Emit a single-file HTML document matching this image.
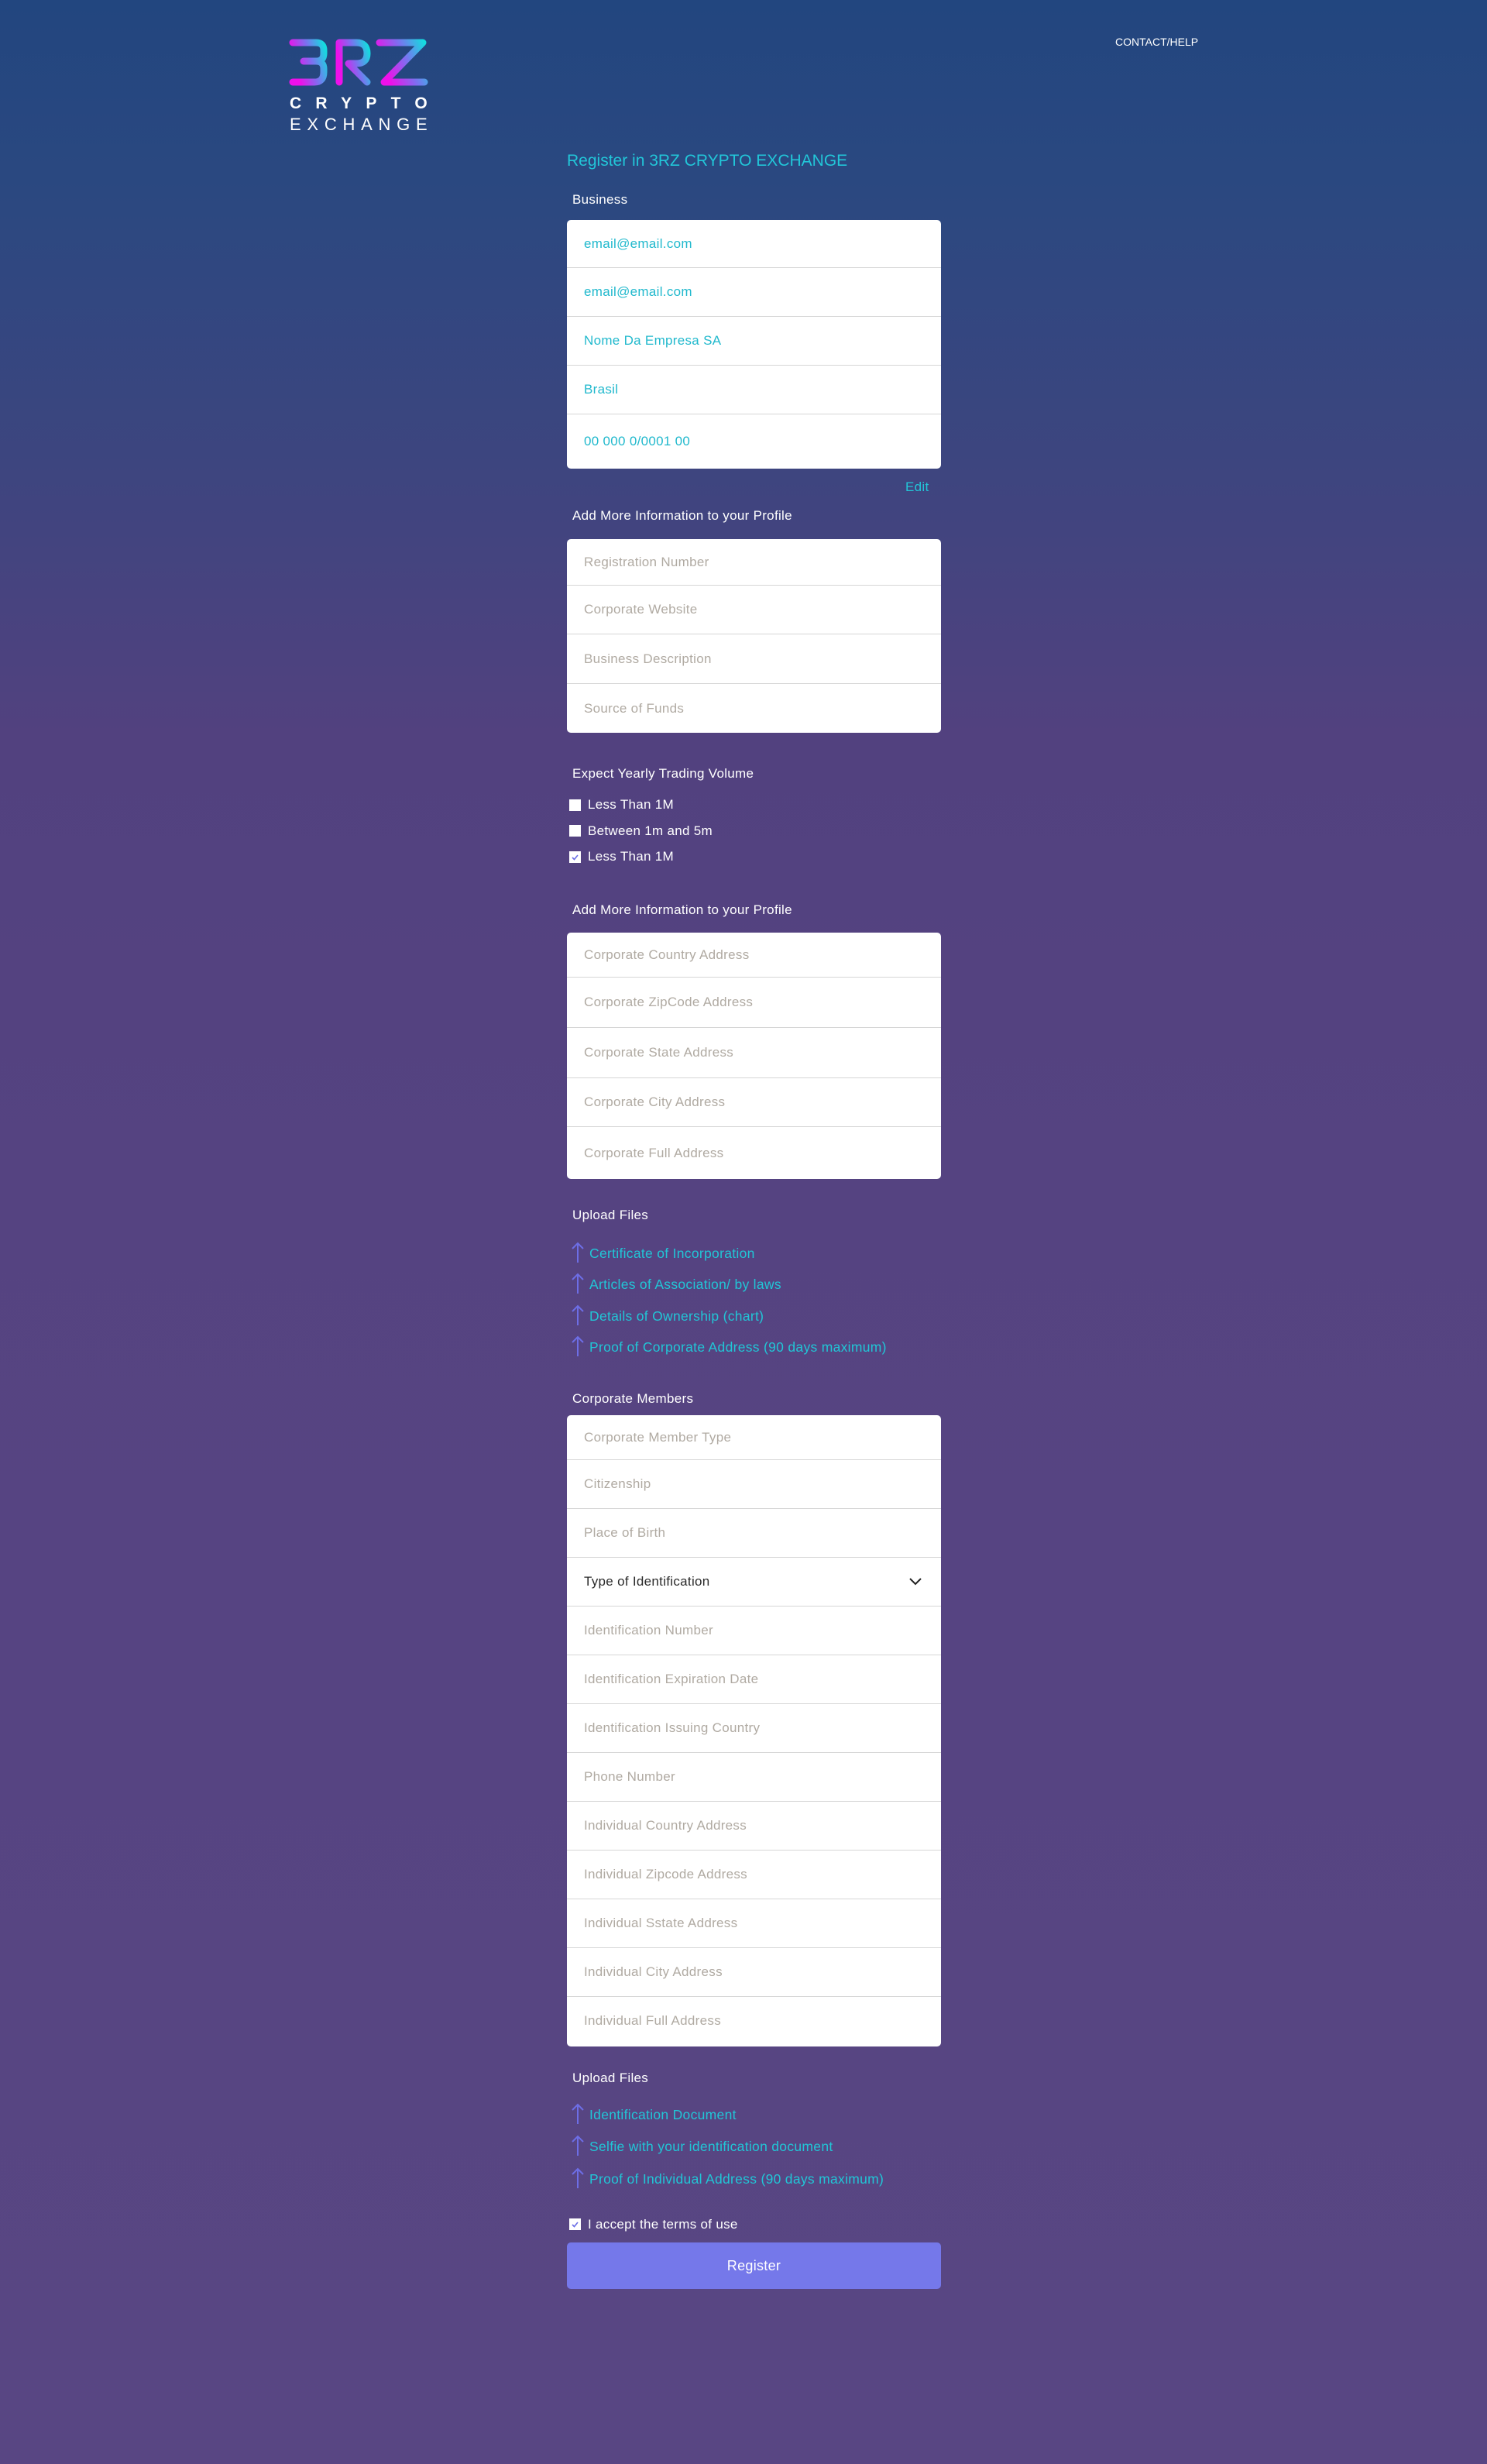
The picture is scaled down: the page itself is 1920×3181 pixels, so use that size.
<!DOCTYPE html>
<html><head><meta charset="utf-8">
<style>
*{margin:0;padding:0;box-sizing:border-box}
body{width:1920px;height:3181px;position:relative;overflow:hidden;font-family:"Liberation Sans",Arial,sans-serif;letter-spacing:0.3px;
background:linear-gradient(180deg,#22467f 0px,#2b4880 250px,#3d457f 600px,#52417f 950px,#554381 1500px,#584683 3181px);}
.a{position:absolute}
.lbl{position:absolute;left:739px;color:#fff;font-size:17px;line-height:20px}
.box{position:absolute;left:732px;width:483px;background:#fff;border-radius:5px;overflow:hidden}
.row{border-bottom:1px solid #d6d6d6;display:flex;align-items:center;padding-left:22px;font-size:17px;color:#b0aaa2}
.row:last-child{border-bottom:none}
.val{color:#21b9cd}
.cb{position:absolute;left:735px;width:15px;height:15px;background:#fff}
.cbt{position:absolute;left:759px;color:#fff;font-size:17px;line-height:20px}
.up{position:absolute;left:738px;color:#21c6d6;font-size:17.5px;line-height:22px;padding-left:23px}
.up svg{position:absolute;left:0;top:-4px}
</style></head><body>
<svg class="a" style="left:370px;top:46px" width="190" height="130" viewBox="0 0 190 130">
<defs><linearGradient id="g" x1="0" x2="1" y1="0.4" y2="0"><stop offset="0" stop-color="#ee10ea"/><stop offset="0.5" stop-color="#7d6ff0"/><stop offset="1" stop-color="#14dce0"/></linearGradient></defs>
<g fill="none" stroke="url(#g)" stroke-width="9" stroke-linecap="round" stroke-linejoin="round">
<path d="M8 9 H38 Q48 9 48 19 V23 Q48 33 38 33 H22 M38 33 Q48 33 48 43 V47 Q48 60 36 60 H8"/>
<path d="M68 60 V9 H90 Q104 9 104 23 Q104 36 90 36 H80 L104 60"/>
<path d="M120 9 H176 L126 60 H178"/>
</g>
<text x="4" y="94" font-family="Liberation Sans" font-weight="bold" font-size="21" fill="#fff" textLength="178" lengthAdjust="spacing">CRYPTO</text>
<text x="4" y="122" font-family="Liberation Sans" font-size="22" fill="#fff" textLength="178" lengthAdjust="spacing">EXCHANGE</text>
</svg>
<div class="a" style="left:0;top:0;width:0;height:0;overflow:hidden">3RZ</div>
<div class="a" style="left:1440px;top:46px;color:#fff;font-size:14px;letter-spacing:0">CONTACT/HELP</div>
<div class="a" style="left:732px;top:196px;color:#22c6d8;font-size:21px;letter-spacing:0">Register in 3RZ CRYPTO EXCHANGE</div>

<div class="lbl" style="top:248px">Business</div>
<div class="box" style="top:284px;height:321px">
<div class="row val" style="height:62px">email@email.com</div>
<div class="row val" style="height:63px">email@email.com</div>
<div class="row val" style="height:63px">Nome Da Empresa SA</div>
<div class="row val" style="height:63px">Brasil</div>
<div class="row val" style="height:70px">00 000 0/0001 00</div>
</div>
<div class="a" style="left:1169px;top:619px;color:#22c6d8;font-size:17px">Edit</div>

<div class="lbl" style="top:656px">Add More Information to your Profile</div>
<div class="box" style="top:696px;height:250px">
<div class="row" style="height:60px">Registration Number</div>
<div class="row" style="height:63px">Corporate Website</div>
<div class="row" style="height:64px">Business Description</div>
<div class="row" style="height:63px">Source of Funds</div>
</div>

<div class="lbl" style="top:989px">Expect Yearly Trading Volume</div>
<div class="cb" style="top:1032px"></div><div class="cbt" style="top:1029px">Less Than 1M</div>
<div class="cb" style="top:1065px"></div><div class="cbt" style="top:1063px">Between 1m and 5m</div>
<div class="cb" style="top:1099px"><svg width="15" height="15"><path d="M4 8 L6.5 10.5 L11 5" stroke="#6b6fe6" stroke-width="1.6" fill="none"/></svg></div><div class="cbt" style="top:1096px">Less Than 1M</div>

<div class="lbl" style="top:1165px">Add More Information to your Profile</div>
<div class="box" style="top:1204px;height:318px">
<div class="row" style="height:58px">Corporate Country Address</div>
<div class="row" style="height:65px">Corporate ZipCode Address</div>
<div class="row" style="height:65px">Corporate State Address</div>
<div class="row" style="height:63px">Corporate City Address</div>
<div class="row" style="height:67px">Corporate Full Address</div>
</div>

<div class="lbl" style="top:1559px">Upload Files</div>
<div class="up" style="top:1607px"><svg width="16" height="28"><path d="M8 27 V2 M1 9 L8 2 L15 9" stroke="#6d6ee6" stroke-width="2" fill="none"/></svg>Certificate of Incorporation</div>
<div class="up" style="top:1647px"><svg width="16" height="28"><path d="M8 27 V2 M1 9 L8 2 L15 9" stroke="#6d6ee6" stroke-width="2" fill="none"/></svg>Articles of Association/ by laws</div>
<div class="up" style="top:1688px"><svg width="16" height="28"><path d="M8 27 V2 M1 9 L8 2 L15 9" stroke="#6d6ee6" stroke-width="2" fill="none"/></svg>Details of Ownership (chart)</div>
<div class="up" style="top:1728px"><svg width="16" height="28"><path d="M8 27 V2 M1 9 L8 2 L15 9" stroke="#6d6ee6" stroke-width="2" fill="none"/></svg>Proof of Corporate Address (90 days maximum)</div>

<div class="lbl" style="top:1796px">Corporate Members</div>
<div class="box" style="top:1827px;height:815px">
<div class="row" style="height:58px">Corporate Member Type</div>
<div class="row" style="height:63px">Citizenship</div>
<div class="row" style="height:63px">Place of Birth</div>
<div class="row" style="height:63px;color:#2a2a2a;justify-content:space-between;padding-right:24px">Type of Identification<svg width="18" height="12"><path d="M2 2 L9 9 L16 2" stroke="#222" stroke-width="2" fill="none"/></svg></div>
<div class="row" style="height:63px">Identification Number</div>
<div class="row" style="height:63px">Identification Expiration Date</div>
<div class="row" style="height:63px">Identification Issuing Country</div>
<div class="row" style="height:63px">Phone Number</div>
<div class="row" style="height:63px">Individual Country Address</div>
<div class="row" style="height:63px">Individual Zipcode Address</div>
<div class="row" style="height:63px">Individual Sstate Address</div>
<div class="row" style="height:63px">Individual City Address</div>
<div class="row" style="height:62px">Individual Full Address</div>
</div>

<div class="lbl" style="top:2673px">Upload Files</div>
<div class="up" style="top:2719px"><svg width="16" height="28"><path d="M8 27 V2 M1 9 L8 2 L15 9" stroke="#6d6ee6" stroke-width="2" fill="none"/></svg>Identification Document</div>
<div class="up" style="top:2760px"><svg width="16" height="28"><path d="M8 27 V2 M1 9 L8 2 L15 9" stroke="#6d6ee6" stroke-width="2" fill="none"/></svg>Selfie with your identification document</div>
<div class="up" style="top:2802px"><svg width="16" height="28"><path d="M8 27 V2 M1 9 L8 2 L15 9" stroke="#6d6ee6" stroke-width="2" fill="none"/></svg>Proof of Individual Address (90 days maximum)</div>

<div class="cb" style="top:2864px"><svg width="15" height="15"><path d="M4 8 L6.5 10.5 L11 5" stroke="#6b6fe6" stroke-width="1.6" fill="none"/></svg></div><div class="cbt" style="top:2862px">I accept the terms of use</div>
<div class="a" style="left:732px;top:2895px;width:483px;height:60px;background:#7578ea;border-radius:5px;color:#fff;font-size:18px;display:flex;align-items:center;justify-content:center">Register</div>
</body></html>
